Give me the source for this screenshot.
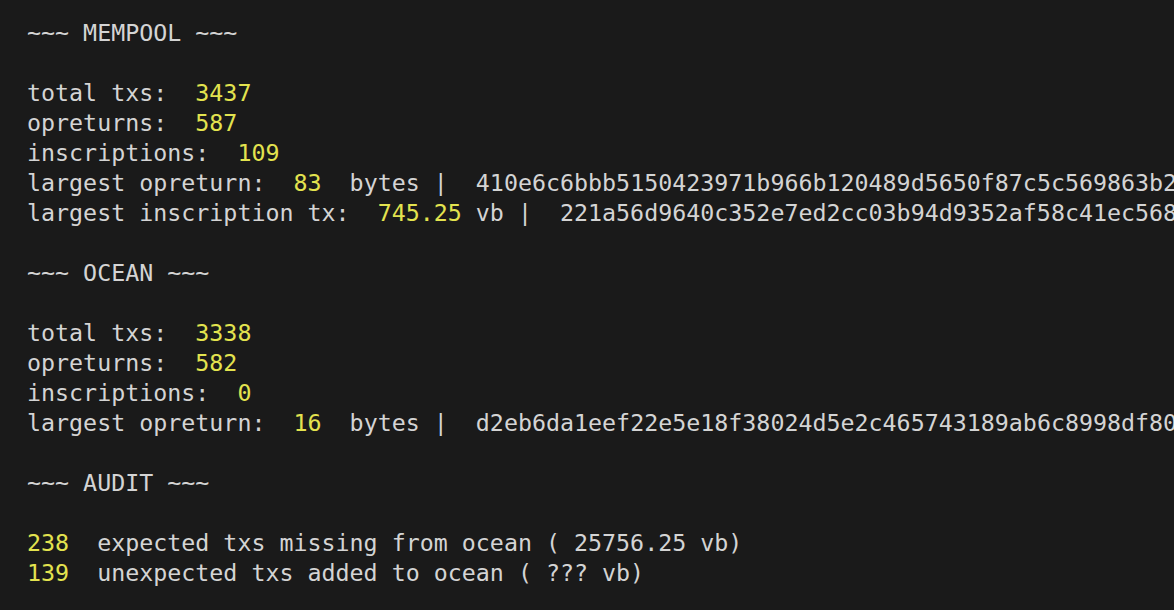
const Y = ({ children }) => <span className="text-[#e3e34f]">{children}</span>;

const Line = ({ children }) => <div className="h-[30px] leading-[30px]">{children || "\u00a0"}</div>;

export default function App() {
  return (
    <div
      className="h-[610px] w-[1174px] overflow-hidden bg-[#1a1a1a] pl-[27px] pt-[18px] text-[23.3px] text-[#d4d4d4] whitespace-pre"
      style={{ fontFamily: '"DejaVu Sans Mono", "Liberation Mono", monospace' }}
    >
      <Line>~~~ MEMPOOL ~~~</Line>
      <Line />
      <Line>total txs:  <Y>3437</Y></Line>
      <Line>opreturns:  <Y>587</Y></Line>
      <Line>inscriptions:  <Y>109</Y></Line>
      <Line>largest opreturn:  <Y>83</Y>  bytes |  410e6c6bbb5150423971b966b120489d5650f87c5c569863b2</Line>
      <Line>largest inscription tx:  <Y>745.25</Y> vb |  221a56d9640c352e7ed2cc03b94d9352af58c41ec568</Line>
      <Line />
      <Line>~~~ OCEAN ~~~</Line>
      <Line />
      <Line>total txs:  <Y>3338</Y></Line>
      <Line>opreturns:  <Y>582</Y></Line>
      <Line>inscriptions:  <Y>0</Y></Line>
      <Line>largest opreturn:  <Y>16</Y>  bytes |  d2eb6da1eef22e5e18f38024d5e2c465743189ab6c8998df80</Line>
      <Line />
      <Line>~~~ AUDIT ~~~</Line>
      <Line />
      <Line><Y>238</Y>  expected txs missing from ocean ( 25756.25 vb)</Line>
      <Line><Y>139</Y>  unexpected txs added to ocean ( ??? vb)</Line>
    </div>
  );
}
